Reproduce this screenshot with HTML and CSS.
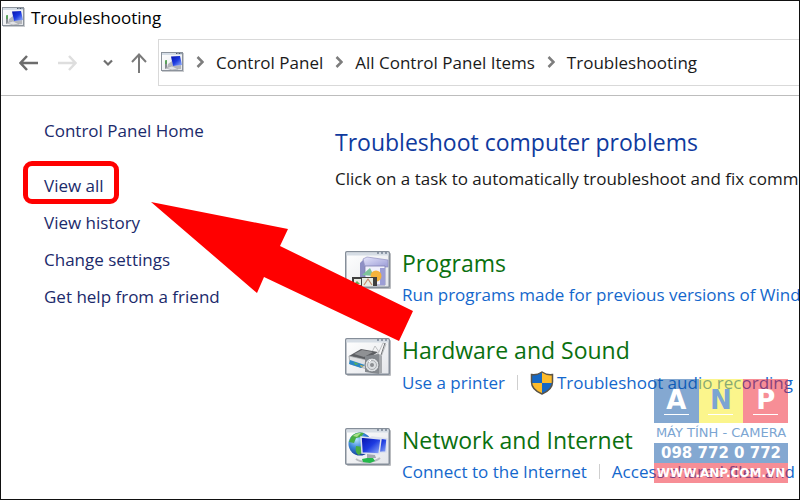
FILE: index.html
```
<!DOCTYPE html>
<html lang="en">
<head>
    <meta charset="UTF-8">
    <meta name="viewport" content="width=device-width, initial-scale=1.0">
    <title>Troubleshooting</title>
    <link rel="stylesheet" href="styles.css">
</head>
<body>
    <!-- Shared icon shapes -->
    <svg class="defs" aria-hidden="true">
        <defs>
            <linearGradient id="screen" x1="0" y1="0" x2="1" y2="1">
                <stop offset="0" stop-color="#0712a8"/>
                <stop offset=".5" stop-color="#1c3ae0"/>
                <stop offset="1" stop-color="#9db8fa"/>
            </linearGradient>
            <linearGradient id="paper" x1="0" y1="0" x2="1" y2="1">
                <stop offset="0" stop-color="#ffffff"/>
                <stop offset="1" stop-color="#e4e6ea"/>
            </linearGradient>
            <linearGradient id="box" x1="0" y1="0" x2="1" y2="1">
                <stop offset="0" stop-color="#e6e6fb"/>
                <stop offset="1" stop-color="#9a9bd6"/>
            </linearGradient>
            <radialGradient id="globe" cx=".35" cy=".3" r=".75">
                <stop offset="0" stop-color="#b9e4ff"/>
                <stop offset=".5" stop-color="#3a86d8"/>
                <stop offset="1" stop-color="#123c94"/>
            </radialGradient>
            <symbol id="computer" viewBox="0 0 23 20">
                <rect x="1" y="1" width="22" height="19" fill="#c9cbce"/>
                <rect x=".5" y=".5" width="21" height="18" fill="url(#paper)" stroke="#8b929b"/>
                <path d="M1 2h20" stroke="#d5dde6" stroke-width="2"/>
                <path d="M15 1.500h1.500M17.500 1.500h1.500M19.500 1.500h1" stroke="#4d5c70"/>
                <path d="M7 12l4-3 1 5 8-1v4l-9 1-5-2z" fill="#b4b6bb"/>
                <path d="M10 4.500l9-.500 2 9-9 1z" fill="url(#screen)"/>
                <path d="M4 9l2-1v8l-2 1z" fill="#858a90"/>
                <path d="M5 8v4" stroke="#3fae3a" stroke-width="1.200"/>
                <path d="M5 16l6-2 6 3-6 1z" fill="#e2e3e6" stroke="#9b9da2" stroke-width=".5"/>
            </symbol>
            <symbol id="frame" viewBox="0 0 46 38">
                <rect x="2" y="2" width="44" height="36" rx="1" fill="#b9bbbf"/>
                <rect x=".75" y=".75" width="43.500" height="35.500" rx="1" fill="url(#paper)" stroke="#858e99" stroke-width="1.500"/>
                <path d="M1.500 3h42" stroke="#d6dde5" stroke-width="3"/>
                <path d="M32 2h2M36 2h2M40 2h2" stroke="#4b5b70" stroke-width="1.200"/>
            </symbol>
        </defs>
    </svg>

    <div class="window">
        <div class="titlebar">
            <svg class="small-icon"><use href="#computer"/></svg>
            <span>Troubleshooting</span>
        </div>

        <div class="navbar">
            <div class="nav-buttons">
                <button class="nav-btn" aria-label="Back">
                    <svg width="20" height="16" viewBox="0 0 20 16"><path d="M19 8H2M8 1L1.500 8L8 15" fill="none" stroke="#6c6c6c" stroke-width="2.500"/></svg>
                </button>
                <button class="nav-btn" aria-label="Forward" disabled>
                    <svg width="20" height="16" viewBox="0 0 20 16"><path d="M1 8H18M12 1L18.500 8L12 15" fill="none" stroke="#dedede" stroke-width="2.500"/></svg>
                </button>
                <button class="nav-btn recent" aria-label="Recent locations">
                    <svg width="10" height="8" viewBox="0 0 10 8"><path d="M1 1.500L5 5.500L9 1.500" fill="none" stroke="#6f6f6f" stroke-width="2.200"/></svg>
                </button>
                <button class="nav-btn" aria-label="Up">
                    <svg width="16" height="20" viewBox="0 0 16 20"><path d="M8 20V2M1 9L8 1.500L15 9" fill="none" stroke="#7a7a7a" stroke-width="2"/></svg>
                </button>
            </div>
            <nav class="address" aria-label="Location">
                <svg class="small-icon"><use href="#computer"/></svg>
                <svg class="sep" viewBox="0 0 8 12"><path d="M1.500 1L6.500 6L1.500 11"/></svg>
                <a href="#">Control Panel</a>
                <svg class="sep" viewBox="0 0 8 12"><path d="M1.500 1L6.500 6L1.500 11"/></svg>
                <a href="#">All Control Panel Items</a>
                <svg class="sep" viewBox="0 0 8 12"><path d="M1.500 1L6.500 6L1.500 11"/></svg>
                <a href="#">Troubleshooting</a>
            </nav>
        </div>

        <div class="content">
            <div class="sidebar">
                <a class="home" href="#">Control Panel Home</a>
                <a class="marked" href="#">View all</a>
                <a href="#">View history</a>
                <a href="#">Change settings</a>
                <a href="#">Get help from a friend</a>
            </div>

            <main class="main">
                <h1>Troubleshoot computer problems</h1>
                <p>Click on a task to automatically troubleshoot and fix common</p>

                <div class="category">
                    <svg class="icon" viewBox="0 0 46 38">
                        <use href="#frame"/>
                        <path d="M15 12l4-4 2 5v20h-6z" fill="#8d8fc4"/>
                        <path d="M18 8l4-2 21 3v7H20z" fill="url(#box)" stroke="#9292c2" stroke-width=".7"/>
                        <path d="M20 15h20v19H20z" fill="#f0f0fc" stroke="#7d7db0" stroke-width=".8"/>
                        <path d="M35 17h5v17h-5z" fill="#9c9ed5"/>
                        <path d="M17 24l8-7 4 8z" fill="#7cc39a"/>
                        <circle cx="31" cy="25" r="5.500" fill="#f4b33c"/>
                        <path d="M7 26h25v9H7z" fill="#3f3f3f"/>
                        <path d="M9 28h7v6H9zM17 27h11v8H17z" fill="#e8eee4"/>
                        <path d="M19 34l4-6 4 6" fill="none" stroke="#c58e72" stroke-width="1.200"/>
                        <path d="M9 33l3-3 3 3z" fill="#62aa59"/>
                    </svg>
                    <div class="text">
                        <h2>Programs</h2>
                        <div class="links">
                            <a href="#">Run programs made for previous versions of Windows</a>
                        </div>
                    </div>
                </div>

                <div class="category">
                    <svg class="icon" viewBox="0 0 46 38">
                        <use href="#frame"/>
                        <path d="M27 14l3-6 4 6M33 16l5-11 3 1-5 13z" fill="#f4f4f5" stroke="#b0b2b5" stroke-width=".8"/>
                        <path d="M40 5l-4 12" stroke="#77797c"/>
                        <path d="M4 18l12-7 17 3-12 8z" fill="#5c5e62"/>
                        <path d="M9 16l8-4 11 2-9 5z" fill="#8f9194"/>
                        <path d="M4 18l18 4v9L5 26z" fill="#e0e1e3" stroke="#97999c" stroke-width=".7"/>
                        <path d="M22 22l11-7v8l-11 8z" fill="#b9bbbe"/>
                        <path d="M5 22l15 5-4 3-12-4z" fill="#2a86c8"/>
                        <path d="M9 24l5 2-4 1z" fill="#57b256"/>
                        <path d="M15 27l4 1-3 1z" fill="#e5bd42"/>
                        <path d="M20 18l14-2v20l-14-2z" fill="#85898e"/>
                        <path d="M34 16l3 2v17l-3 1z" fill="#a6a9ad"/>
                        <circle cx="27" cy="27" r="7" fill="#dcdfe2" stroke="#777b80"/>
                        <circle cx="27" cy="27" r="4.500" fill="none" stroke="#a9acb0"/>
                        <circle cx="27" cy="27" r="2" fill="#8b8e92"/>
                        <path d="M24 24l2-2" stroke="#ffffff"/>
                    </svg>
                    <div class="text">
                        <h2>Hardware and Sound</h2>
                        <div class="links">
                            <a href="#">Use a printer</a>
                            <span class="divider"></span>
                            <a class="shielded" href="#">
                                <svg class="shield" viewBox="0 0 24 24">
                                    <path d="M12 1C9 3 5 4 1.500 3.500V11c0 6 4.500 9.500 10.500 12z" fill="#1668c4"/>
                                    <path d="M12 1c3 2 7 3 10.500 2.500V12H12z" fill="#fdbb2b"/>
                                    <path d="M1.500 12H12v11C6 20.500 2 17.500 1.500 12z" fill="#fdbb2b"/>
                                    <path d="M12 12h10.500C22 17.500 18 20.500 12 23z" fill="#1668c4"/>
                                    <path d="M12 1c3 2 7 3 10.500 2.500V11c0 6-4.500 9.500-10.500 12C6 20.500 1.500 17 1.500 11V3.500C5 4 9 3 12 1z" fill="none" stroke="#5a5449" stroke-width="1.500"/>
                                </svg>
                                <span>Troubleshoot audio recording</span>
                            </a>
                        </div>
                    </div>
                </div>

                <div class="category">
                    <svg class="icon" viewBox="0 0 46 38">
                        <use href="#frame"/>
                        <circle cx="15" cy="16" r="11.500" fill="url(#globe)"/>
                        <path d="M6 9c4-5 10-5 13-4l-3 4-5 1-2 5-5-1zM11 18l7 1 1 4-5 4c-3-1-4-5-3-9z" fill="#48ad43"/>
                        <path d="M8 8c3-3 6-3 8-3l-4 4z" fill="#a8e08a"/>
                        <path d="M27 9l15 2-1 13-14 1z" fill="url(#screen)" stroke="#dde2ee" stroke-width="1.500"/>
                        <path d="M16 9l20 2-2 15-17-1z" fill="url(#screen)" stroke="#dde2ee" stroke-width="1.500"/>
                        <path d="M22 26l8 1 1 3h-9z" fill="#a3a8b0"/>
                        <path d="M11 31c5 4 18 4 24-1" fill="none" stroke="#b9bcc1" stroke-width="2"/>
                        <path d="M17 31l5-1 6 0 2 3-5 2-7-1z" fill="#25b84b"/>
                    </svg>
                    <div class="text">
                        <h2>Network and Internet</h2>
                        <div class="links">
                            <a href="#">Connect to the Internet</a>
                            <span class="divider"></span>
                            <a href="#">Access shared files and</a>
                        </div>
                    </div>
                </div>
            </main>
        </div>

        <!-- Annotation arrow -->
        <svg class="arrow" viewBox="0 0 262 139" aria-hidden="true">
            <path d="M0 0L137 27L129 44L262 109L248 139L113 75L106 91Z" fill="#ff0000"/>
        </svg>

        <!-- Watermark -->
        <div class="watermark">
            <div class="tiles">
                <span class="tile blue">A</span>
                <span class="tile yellow">N</span>
                <span class="tile red">P</span>
            </div>
            <div class="tagline">MÁY TÍNH - CAMERA</div>
            <div class="phone">098 772 0 772</div>
            <div class="site">WWW.ANP.COM.VN</div>
        </div>
    </div>
</body>
</html>
```
FILE: styles.css
```
* { box-sizing: border-box; }

body {
    margin: 0;
    font-family: "Open Sans", "Noto Sans", sans-serif;
    font-size: 17px;
    color: #1a1a1a;
    background: white;
}

a { text-decoration: none; white-space: nowrap; }
a:hover { text-decoration: underline; }

.defs { position: absolute; width: 0; height: 0; }

.window {
    position: relative;
    height: 100vh;
    border: 1px solid #111;
    overflow: hidden;
}

.small-icon { width: 23px; height: 20px; flex: none; }

.titlebar {
    display: flex;
    align-items: center;
    gap: 6px;
    height: 32px;
    padding-left: 1px;
    color: #000;
}

.navbar {
    display: flex;
    align-items: center;
    height: 63px;
    padding: 6px 0 10px;
    border-bottom: 1px solid #bdbdbd;
}

.nav-buttons {
    display: flex;
    align-items: center;
    justify-content: space-between;
    width: 157px;
    padding: 2px 11px 0 18px;
    flex: none;
}

.nav-btn {
    display: flex;
    padding: 0;
    border: none;
    background: none;
    cursor: pointer;
}

.recent { margin-left: 8px; }

.address {
    display: flex;
    flex: 1;
    align-items: center;
    gap: 12px;
    height: 47px;
    padding-left: 2px;
    border: 1px solid #d9d9d9;
    border-right: none;
}

.address a { color: #1a1a1a; }

.sep { width: 8px; height: 12px; flex: none; fill: none; stroke: #7d7d7d; stroke-width: 2.5; }

.content { display: flex; }

.sidebar {
    display: flex;
    flex-direction: column;
    align-items: flex-start;
    width: 334px;
    padding: 16px 0 0 43px;
    flex: none;
}

.sidebar a { color: #1b2a6b; line-height: 37px; }
.sidebar .home { margin-bottom: 18px; }

/* Red frame around the highlighted link */
.marked { position: relative; }
.marked::before {
    content: "";
    position: absolute;
    top: -6px;
    left: -21px;
    right: -15px;
    bottom: 0;
    border: 5px solid #ff0000;
    border-radius: 9px;
}

.main { flex: 1; min-width: 0; padding-top: 28px; }

h1 {
    margin: 0;
    font-size: 23px;
    font-weight: normal;
    line-height: 36px;
    color: #0f3a9e;
    white-space: nowrap;
}

.main p {
    margin: 5px 0 54px;
    line-height: 28px;
    color: #1a1a1a;
    white-space: nowrap;
}

.category {
    display: flex;
    gap: 11px;
    margin-bottom: 25px;
    padding-left: 10px;
}

.icon { width: 46px; height: 38px; margin-top: 4px; flex: none; }

h2 {
    margin: 0;
    font-size: 23px;
    font-weight: normal;
    line-height: 32px;
    color: #0b700f;
    white-space: nowrap;
}

.links {
    display: flex;
    align-items: center;
    gap: 12px;
    min-height: 30px;
}

.links a { color: #1467cc; }

.shielded { display: flex; align-items: center; gap: 3px; height: 33px; }
.shield { width: 24px; height: 24px; }

.divider { width: 1px; height: 15px; background: #cfcfcf; }

.arrow {
    position: absolute;
    top: 201px;
    left: 150px;
    width: 262px;
    height: 139px;
    pointer-events: none;
}

.watermark {
    position: absolute;
    right: 11px;
    bottom: 16px;
    width: 134px;
    font-family: "DejaVu Sans", sans-serif;
    font-weight: bold;
    text-align: center;
    color: white;
    white-space: nowrap;
    pointer-events: none;
}

.tiles { display: grid; grid-template-columns: repeat(3, 1fr); }

.tile { height: 44px; padding-top: 7px; font-size: 26px; line-height: 28px; }
.tile::after {
    content: "";
    display: block;
    width: 25px;
    height: 1px;
    margin: 0 auto;
    background: white;
}

.blue, .phone { background: rgba(10, 82, 164, 0.5); }
.yellow { background: rgba(247, 235, 25, 0.5); color: #7ba5d2; }
.red, .site { background: rgba(240, 30, 45, 0.5); }

.tagline { color: #7ba5d2; font-size: 13px; font-weight: normal; line-height: 20px; }
.phone { font-size: 15px; line-height: 20px; }
.site { font-size: 12px; line-height: 20px; }
```
